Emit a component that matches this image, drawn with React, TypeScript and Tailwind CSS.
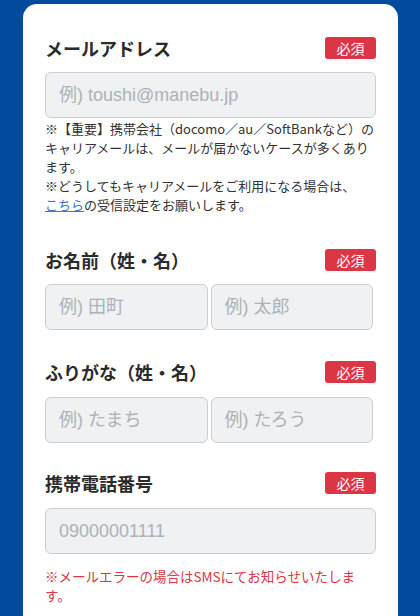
import React from "react";

const jp = { fontFamily: '"Noto Sans CJK JP", "Noto Sans", sans-serif' };
const ph = { fontFamily: '"Liberation Sans", "Noto Sans CJK JP", sans-serif' };

function Header({ title }: { title: string }) {
  return (
    <div className="flex items-center justify-between h-[22px]">
      <div className="text-[18px] font-bold text-[#2b2b2b] leading-[22px]" style={jp}>
        {title}
      </div>
      <div
        className="w-[51px] h-[22px] rounded-[3px] bg-[#dc3545] text-white text-[14px] flex items-center justify-center leading-none"
        style={jp}
      >
        必須
      </div>
    </div>
  );
}

function Input({ placeholder, className = "" }: { placeholder: string; className?: string }) {
  return (
    <input
      placeholder={placeholder}
      readOnly
      className={
        "block h-[46px] bg-[#eff1f3] border border-[#c9ced2] rounded-[6px] px-[13px] text-[18px] text-[#333] placeholder:text-[#adb2b6] outline-none " +
        className
      }
      style={ph}
    />
  );
}

export default function App() {
  return (
    <div className="w-[420px] h-[616px] overflow-hidden bg-[#014a9c] pt-[4px] pl-[23px] pr-[22px]">
      <div className="bg-white rounded-t-[14px] h-full px-[22px] pt-[33px]">
        <Header title="メールアドレス" />
        <Input placeholder="例) toushi@manebu.jp" className="w-full mt-[13px]" />
        <div className="mt-[1px] text-[13px] leading-[19px] text-[#333]" style={jp}>
          <p>※【重要】携帯会社（docomo／au／SoftBankなど）のキャリアメールは、メールが届かないケースが多くあります。</p>
          <p>
            ※どうしてもキャリアメールをご利用になる場合は、
            <span className="inline-block text-[#3a78c9] underline">こちら</span>の受信設定をお願いします。
          </p>
        </div>

        <div className="mt-[35px]">
          <Header title="お名前（姓・名）" />
          <div className="mt-[13px] w-[328px] grid grid-cols-2 gap-[3px]">
            <Input placeholder="例) 田町" className="w-full h-[45px]" />
            <Input placeholder="例) 太郎" className="w-full h-[45px]" />
          </div>
        </div>

        <div className="mt-[31px]">
          <Header title="ふりがな（姓・名）" />
          <div className="mt-[14px] w-[328px] grid grid-cols-2 gap-[3px]">
            <Input placeholder="例) たまち" className="w-full h-[45px]" />
            <Input placeholder="例) たろう" className="w-full h-[45px]" />
          </div>
        </div>

        <div className="mt-[29px]">
          <Header title="携帯電話番号" />
          <Input placeholder="09000001111" className="w-full mt-[14px]" />
          <p className="mt-[13px] text-[13.5px] leading-[19px] text-[#dc3545]" style={jp}>
            ※メールエラーの場合はSMSにてお知らせいたします。
          </p>
        </div>
      </div>
    </div>
  );
}
